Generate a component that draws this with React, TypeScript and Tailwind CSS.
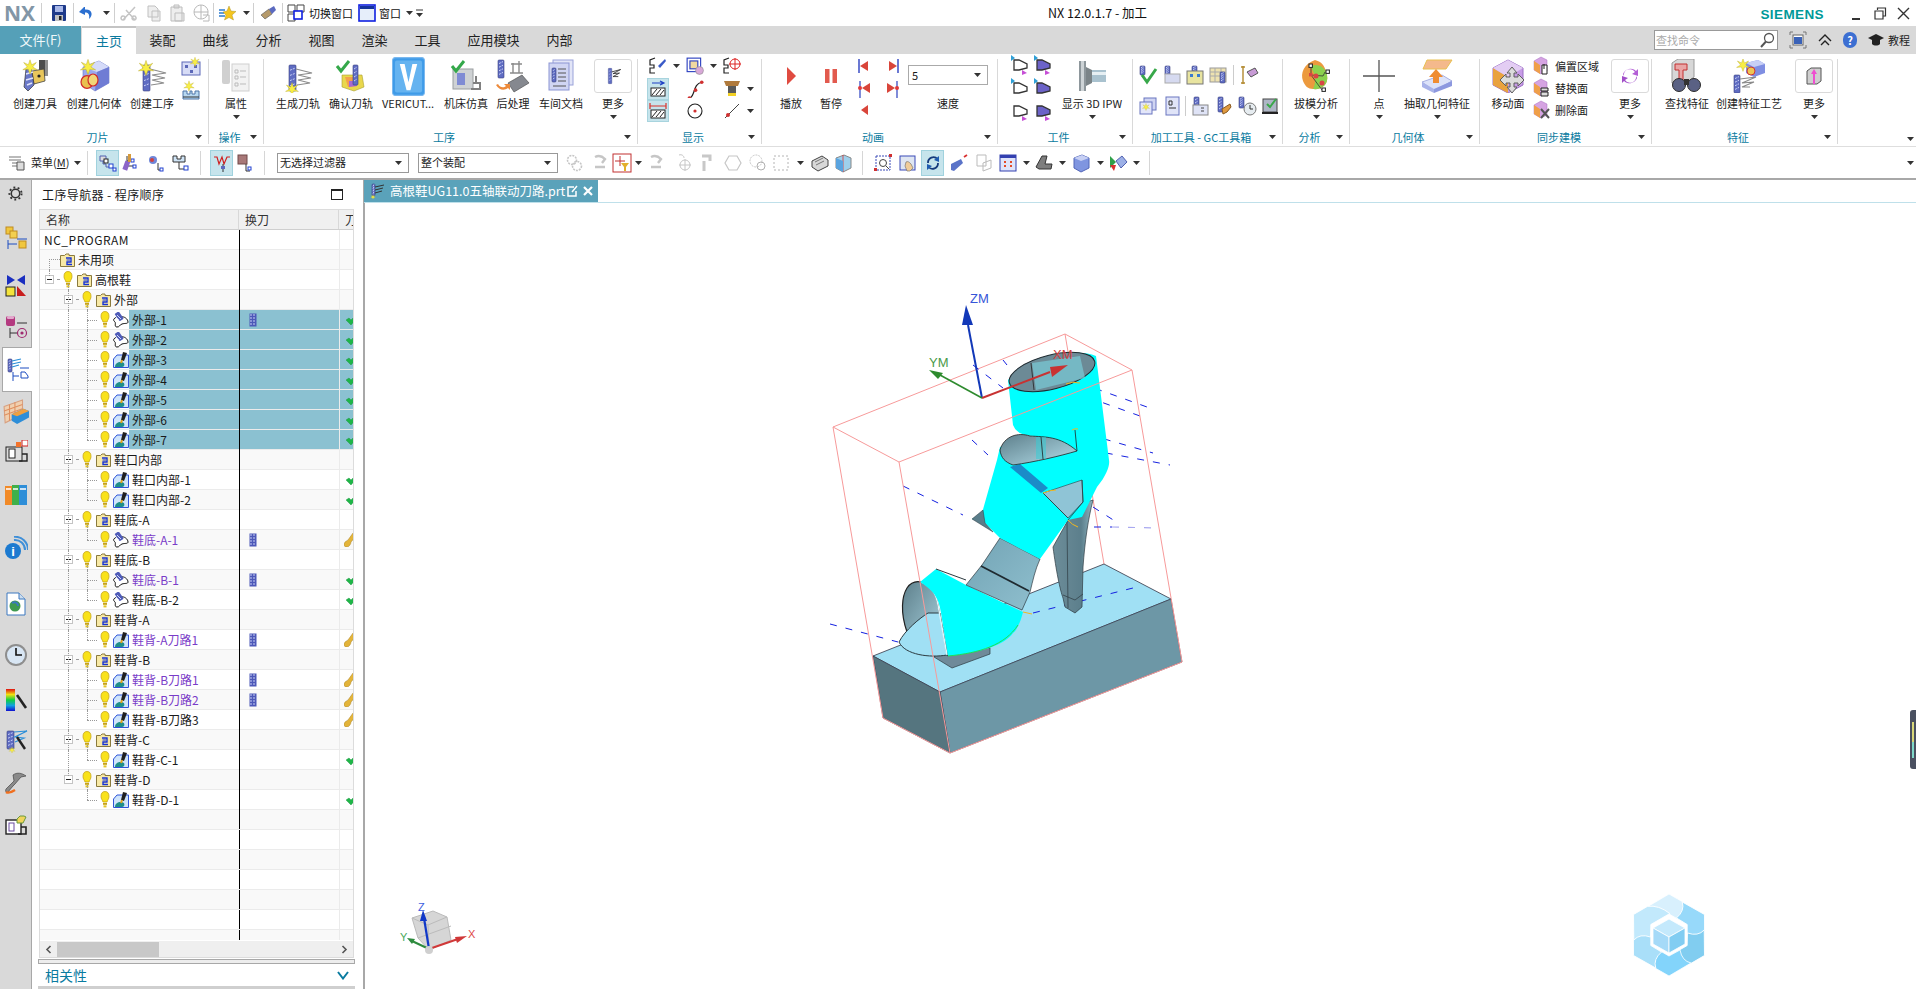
import React from "react";

type P = { c?: string; v?: string; children?: React.ReactNode };
const S = ({ c = "w-4 h-4", v = "0 0 16 16", children }: P) => (
  <svg viewBox={v} className={c + " shrink-0"}>{children}</svg>
);

const Spark = ({ x, y, s = 1 }: { x: number; y: number; s?: number }) => (
  <g transform={`translate(${x} ${y}) scale(${s})`}>
    <polygon points="0,-8 1.8,-2.5 7,-5 3,0 8,3 2,2.5 0,8 -2,2.5 -8,3 -3,0 -7,-5 -1.8,-2.5" fill="#f8ee45" stroke="#b8a82a" strokeWidth=".5" />
  </g>
);
const Bar = ({ x, y, w, h }: { x: number; y: number; w: number; h: number }) => (
  <g>
    <rect x={x} y={y} width={w} height={h} rx={1} fill="#5f6cc2" stroke="#39427f" strokeWidth=".6" />
    <path d={`M${x + 1} ${y + h * 0.2}l${w - 2} -2M${x + 1} ${y + h * 0.4}l${w - 2} -2M${x + 1} ${y + h * 0.6}l${w - 2} -2M${x + 1} ${y + h * 0.8}l${w - 2} -2`} stroke="#c9d0f5" strokeWidth="1" strokeDasharray="2 1" />
  </g>
);
const Caret = ({ c = "" }: { c?: string }) => (
  <svg viewBox="0 0 7 4" className={"w-[7px] h-[4px] shrink-0 " + c}><polygon points="0,0 7,0 3.5,4" fill="#333" /></svg>
);

/* ---- large ribbon icons ---- */
const big = "w-[34px] h-[34px]";
const V = "0 0 34 34";
const IcoCreateTool = () => (
  <S c={big} v={V}>
    <rect x="21" y="1" width="9" height="16" fill="#4c4c4c" />
    <rect x="27" y="1" width="3" height="16" fill="#8f8f8f" />
    <polygon points="14,12 26,10 27,22 16,25" fill="#e8c65c" stroke="#444" strokeWidth=".8" />
    <circle cx="21" cy="17" r="1.6" fill="#222" />
    <path d="M8 10L13 8L16 26L10 32L6 28Z" fill="#6a78c8" stroke="#333" strokeWidth=".7" />
    <path d="M8 15L15 13M8 21L15 19M9 26L14 24" stroke="#dfe3fa" strokeWidth="1.4" />
    <Spark x={12} y={8} s={0.9} />
  </S>
);
const IcoGeom = () => (
  <S c={big} v={V}>
    <polygon points="6,8 22,2 32,8 32,24 18,32 6,24" fill="#9ba8ee" stroke="#6a76c0" strokeWidth=".6" />
    <polygon points="6,8 20,13 32,8 22,2" fill="#d5dbf9" />
    <polygon points="20,13 32,8 32,24 18,32" fill="#6f7cd4" />
    <ellipse cx="10" cy="23" rx="6" ry="6.4" fill="#e9c04e" stroke="#d02a2a" strokeWidth="1.2" />
    <ellipse cx="16" cy="21" rx="5" ry="6" fill="#f2d678" stroke="#d02a2a" strokeWidth="1.2" />
    <Spark x={11} y={8} s={0.95} />
  </S>
);
const IcoOp = ({ spark = "top" }: { spark?: string }) => (
  <S c={big} v={V}>
    <Bar x={8} y={6} w={7} h={26} />
    <path d="M15 10L31 14L17 16L30 19L17 21L29 24L16 26" fill="none" stroke="#8b8b8b" strokeWidth="1.1" />
    {spark === "top" ? <Spark x={11} y={9} s={0.95} /> : <Spark x={11} y={30} s={0.8} />}
  </S>
);
const IcoProps = () => (
  <S c={big} v={V}>
    <rect x="3" y="1" width="8" height="24" rx="2" fill="#d0d0d0" />
    <rect x="13" y="5" width="17" height="27" fill="#f2f2f2" stroke="#cfcfcf" />
    <path d="M16 11h3v3h-3zM16 17h3v3h-3zM16 24h3v3h-3zM21 12h6M21 18h6M21 25h6" stroke="#bbb" fill="none" />
  </S>
);
const IcoVerify = () => (
  <S c={big} v={V}>
    <polygon points="8,16 28,16 30,28 20,32 8,28" fill="#e9d74c" stroke="#a8a030" strokeWidth=".6" />
    <polygon points="11,18 23,18 23,27 14,28" fill="#f3a04b" />
    <polygon points="15,22 23,22 23,27 15,28" fill="#a869d0" />
    <Bar x={19} y={6} w={5} h={20} />
    <path d="M3 7L7 12L15 2" fill="none" stroke="#34a84a" strokeWidth="3" />
  </S>
);
const IcoVericut = () => (
  <svg viewBox={V} className="w-[33px] h-[39px] shrink-0" preserveAspectRatio="none">
    <rect x="0.5" y="0.5" width="33" height="33" rx="3" fill="#3f9be8" stroke="#7ab8ef" />
    <rect x="3" y="3" width="28" height="28" rx="2" fill="#65b3f0" />
    <path d="M8 6L15 29H19L26 6H21L17 22L13 6Z" fill="#ffffff" />
  </svg>
);
const IcoSim = () => (
  <S c={big} v={V}>
    <rect x="4" y="10" width="20" height="20" fill="#cfd2d4" stroke="#9a9ea0" />
    <rect x="8" y="14" width="8" height="12" fill="#7f8bd4" />
    <path d="M24 24h7v6h-9M27 17v7" fill="none" stroke="#808080" strokeWidth="2" />
    <path d="M3 7L7 12L15 2" fill="none" stroke="#34a84a" strokeWidth="3" />
  </S>
);
const IcoPost = () => (
  <S c={big} v={V}>
    <Bar x={2} y={1} w={6} h={18} />
    <path d="M17 4v10M23 2v12M15 5h11M14 14h13" stroke="#8a8a8a" strokeWidth="1.4" fill="none" />
    <polygon points="12,24 26,16 33,24 18,33" fill="#85888f" stroke="#444" strokeWidth=".6" />
    <path d="M2 25c2 4 6 4 8 2l-2-2h6v6l-2-2c-4 3-9 2-12-3z" fill="#ed8a3a" />
  </S>
);
const IcoDoc = () => (
  <S c={big} v={V}>
    <rect x="9" y="1" width="20" height="25" fill="#e2e5f7" stroke="#9aa2d9" />
    <rect x="5" y="4" width="20" height="27" fill="#d0d5f3" stroke="#8b95d3" />
    <Bar x={8} y={9} w={4} h={14} />
    <path d="M14 10h8M14 14h8M14 18h8M14 22h8M9 27h13" stroke="#555" strokeWidth="1" />
  </S>
);
const IcoMoreOp = () => (
  <S c="w-[20px] h-[20px]" v={V}>
    <Bar x={9} y={4} w={6} h={26} />
    <path d="M15 10L30 6L17 13L28 12L17 18L26 18" fill="none" stroke="#333" strokeWidth="1.5" />
  </S>
);
const IcoPlay = () => <S c="w-[18px] h-[20px]" v="0 0 18 20"><polygon points="5,1 14,10 5,19" fill="#e04b40" /></S>;
const IcoPause = () => <S c="w-[18px] h-[16px]" v="0 0 18 16"><rect x="3" y="1" width="4.5" height="14" fill="#e25a4e" /><rect x="10.5" y="1" width="4.5" height="14" fill="#e25a4e" /></S>;
const IcoIPW = () => (
  <S c={big} v={V}>
    <rect x="4" y="2" width="7" height="30" fill="#8e979c" />
    <rect x="6" y="2" width="3" height="30" fill="#cdd3d6" />
    <polygon points="11,8 17,11 17,24 11,27" fill="#7b8488" />
    <rect x="17" y="11" width="14" height="12" fill="#a9c2cf" />
    <rect x="17" y="13" width="14" height="3" fill="#e6eff3" />
  </S>
);
const IcoDraft = () => (
  <S c={big} v={V}>
    <path d="M4 22C1 14 5 5 16 1C24 3 26 8 28 16C30 26 22 31 14 30C9 30 6 27 4 22Z" fill="#ec9a3e" />
    <path d="M11 7C20 4 26 8 28 16C30 26 22 31 14 30C18 22 16 14 11 7Z" fill="#8cd24e" />
    <path d="M12 7L12 16L23 31M12 16L24 17L26 13" fill="none" stroke="#333" strokeWidth=".8" />
    <rect x="10" y="5" width="3.4" height="3.4" fill="#fff" stroke="#222" />
    <rect x="10" y="14" width="3.4" height="3.4" fill="#d94545" />
    <rect x="23" y="29" width="3.4" height="3.4" fill="#fff" stroke="#222" />
    <rect x="27" y="11" width="3.4" height="3.4" fill="#fff" stroke="#222" />
    <circle cx="17" cy="17" r="2.5" fill="#d94545" />
    <circle cx="23" cy="24" r="2.5" fill="#d94545" />
  </S>
);
const IcoPoint = () => <S c={big} v={V}><path d="M17 1V33M1 17H33" stroke="#555" strokeWidth="1.3" /></S>;
const IcoExtract = () => (
  <S c={big} v={V}>
    <polygon points="7,1 32,1 26,10 3,10" fill="#f4b98c" stroke="#e8c050" />
    <polygon points="2,23 22,16 32,22 14,32" fill="#dce2f9" stroke="#7b86d0" strokeWidth=".6" />
    <polygon points="2,23 14,30 14,34 2,28" fill="#a9b3e9" />
    <polygon points="14,30 32,22 32,27 14,34" fill="#8d98df" />
    <path d="M13 24V18H9L16 10L23 18H19V24Z" fill="#ef8c32" />
  </S>
);
const IcoMoveFace = () => (
  <S c={big} v={V}>
    <polygon points="17,1 32,9 32,26 17,34 2,26 2,9" fill="#c79be6" stroke="#9a6fc4" />
    <polygon points="2,9 17,18 17,34 2,26" fill="#e9a23e" />
    <polygon points="17,1 32,9 17,18 2,9" fill="#e3cdf3" />
    <polygon points="21,8 26,14 23,14 23,18 27,18 27,15 33,21 27,27 27,24 23,24 23,28 26,28 21,34 16,28 19,28 19,24 15,24 15,27 9,21 15,15 15,18 19,18 19,14 16,14" fill="#dcdcdc" stroke="#5f5f5f" />
  </S>
);
const IcoFind = () => (
  <S c={big} v={V}>
    <polygon points="2,4 8,0 24,0 24,18 16,24 2,24" fill="#d7d7d7" stroke="#999" />
    <path d="M5 5H17V11H13V21H9V11H5Z" fill="#e9a5a5" stroke="#c23030" />
    <circle cx="9" cy="26" r="6.5" fill="#5a6184" stroke="#2b2b2b" />
    <circle cx="24" cy="26" r="6.5" fill="#5a6184" stroke="#2b2b2b" />
    <rect x="14" y="20" width="5" height="6" fill="#333" />
  </S>
);
const IcoFeat = () => (
  <S c={big} v={V}>
    <Bar x={2} y={16} w={6} h={18} />
    <path d="M8 20L24 18L10 24L22 23L10 28L18 28" fill="none" stroke="#888" strokeWidth="1.1" />
    <polygon points="14,4 26,1 33,5 33,14 22,18 14,14" fill="#7f8ee2" />
    <polygon points="14,4 26,1 33,5 22,8" fill="#c7cff6" />
    <circle cx="19" cy="12" r="4" fill="#edc653" stroke="#d13535" />
    <Spark x={11} y={6} s={0.8} />
  </S>
);
const IcoSync = () => (
  <S c="w-[20px] h-[20px]" v="0 0 20 20">
    <path d="M4 10A6 6 0 0 1 15 6L12 8L18 10L18 3L16 5A8 8 0 0 0 3 8Z" fill="#b35fd6" />
    <path d="M16 10A6 6 0 0 1 5 14L8 12L2 10L2 17L4 15A8 8 0 0 0 17 12Z" fill="#a14ec9" />
  </S>
);
const IcoPink = () => (
  <S c="w-[20px] h-[20px]" v="0 0 20 20">
    <polygon points="3,5 7,2 17,2 17,15 13,18 3,18" fill="#cfcfcf" stroke="#555" />
    <path d="M7 8L10 3L13 8H11V18H9V8Z" fill="#ee4fd0" />
  </S>
);

/* ---- small icons ---- */
const sm = "w-[20px] h-[20px]";
const V20 = "0 0 20 20";
const SmA = () => (
  <S c={sm} v={V20}><rect x="1" y="5" width="18" height="13" fill="#d7dcf6" stroke="#5c68b8" /><path d="M4 8h3v3H4zM9 13h3v3H9zM13 8h3v3h-3z" fill="#5c68b8" /><Spark x={14} y={5} s={0.6} /></S>
);
const SmB = () => (
  <S c={sm} v={V20}><path d="M2 11h4v3h3v-3h2v3h3v-3h4v8H2Z" fill="#b8d8f0" stroke="#4c74a8" /><path d="M2 17h16" stroke="#333" /><Spark x={8} y={6} s={0.65} /></S>
);
const FaceIco = ({ k }: { k: number }) => (
  <S c={sm} v={V20}>
    <polygon points="2,5 9,1 15,4 15,15 9,18 2,14" fill="#d5a3e2" stroke="#a66dc0" strokeWidth=".5" />
    <polygon points="2,5 8,9 8,18 2,14" fill="#ef9f49" />
    {k === 0 && <path d="M10 9h5v9h-5zM12 8v5" fill="#fff" stroke="#222" />}
    {k === 1 && <path d="M9 10h7v3H9zM9 14h7v4H9z" fill="#ddd" stroke="#222" />}
    {k === 2 && <path d="M9 9L17 18M17 9L9 18" stroke="#555" strokeWidth="2" />}
  </S>
);
const Sw = ({ fill = "#555", blue = true, dark = false }: { fill?: string; blue?: boolean; dark?: boolean }) => (
  <S c="w-[18px] h-[18px]" v="0 0 18 18">
    <polyline points="6,1 1,3 1,8 5,8 5,11 1,11 1,16 6,16" fill="none" stroke="#222" strokeWidth="1.2" />
    {blue && <polygon points="9,9 16,2 17,4 11,11" fill={fill} />}
    {dark && <circle cx="12" cy="7" r="5" fill="none" stroke="#d22" />}
    {dark && <path d="M6 7h12M12 1v12" stroke="#d22" />}
  </S>
);
const WPiece = ({ fill = "#fff", top = false, bottom = false }: { fill?: string; top?: boolean; bottom?: boolean }) => (
  <S c="w-[18px] h-[20px]" v="0 0 18 20">
    <path d="M3 5H8L16 9V13L8 15H3Z" fill={fill} stroke="#333" strokeWidth="1.3" />
    {top && <polygon points="0,0 4,3 0,6" fill="#2e9fd6" />}
    {bottom && <polygon points="11,15 16,18 11,20" fill="#c64fd6" />}
  </S>
);
const Step = ({ d }: { d: number }) => {
  const sets: Record<number, React.ReactNode> = {
    0: <><path d="M3 1V15" stroke="#2b3fc0" strokeWidth="1.4" /><polygon points="12,3 4,8 12,13" fill="#d9453a" /></>,
    1: <><polygon points="4,3 12,8 4,13" fill="#d9453a" /><path d="M13 1V15" stroke="#2b3fc0" strokeWidth="1.4" /></>,
    2: <><path d="M4 1V18" stroke="#2b3fc0" strokeWidth="1.2" /><circle cx="4" cy="8" r="2" fill="#e03a3a" /><polygon points="14,3 6,8 14,13" fill="#d9453a" /></>,
    3: <><polygon points="2,3 10,8 2,13" fill="#d9453a" /><path d="M12 1V18" stroke="#2b3fc0" strokeWidth="1.2" /><circle cx="12" cy="8" r="2" fill="#e03a3a" /></>,
    4: <polygon points="12,3 5,8 12,13" fill="#d9453a" />,
  };
  return <S c="w-[16px] h-[18px]" v="0 0 16 18">{sets[d]}</S>;
};
const Gc = ({ k }: { k: number }) => (
  <S c="w-[20px] h-[20px]" v={V20}>
    {k === 0 && <><Bar x={2} y={1} w={5} h={9} /><path d="M4 10L9 17L18 4" fill="none" stroke="#38a84a" strokeWidth="3" /></>}
    {k === 1 && <><Bar x={3} y={1} w={5} h={9} /><rect x="3" y="9" width="15" height="9" fill="#d6daf0" stroke="#aaa" /></>}
    {k === 2 && <><Bar x={7} y={1} w={5} h={10} /><rect x="2" y="6" width="16" height="13" fill="#e8e4a0" stroke="#777" /><path d="M5 9h3v3H5zM12 9h3v3h-3z" fill="#3a7ad0" /></>}
    {k === 3 && <><rect x="1" y="3" width="16" height="14" fill="#eee2b0" stroke="#999" /><path d="M1 7h16M1 11h16M6 3v14M12 3v14" stroke="#aaa" /><Bar x={11} y={7} w={5} h={11} /></>}
    {k === 4 && <><path d="M4 1v18M2 2h4M2 18h4" stroke="#b38a30" strokeWidth="1.4" /><path d="M8 7L16 3L19 8L12 12Z" fill="#c89bd6" stroke="#555" /></>}
    {k === 5 && <><rect x="6" y="2" width="12" height="12" fill="#cfd4f2" stroke="#6a76c0" /><rect x="2" y="6" width="12" height="12" fill="#e3e6fa" stroke="#6a76c0" /><Spark x={8} y={11} s={0.45} /></>}
    {k === 6 && <><rect x="4" y="1" width="13" height="18" fill="#e0e4f8" stroke="#6a76c0" /><path d="M7 5h3v4H7zM7 12h7" stroke="#333" fill="none" /></>}
    {k === 7 && <><Bar x={4} y={1} w={5} h={15} /><rect x="3" y="9" width="15" height="10" fill="#dfe3f6" stroke="#888" /><path d="M11 12h3M11 15h3" stroke="#444" /></>}
    {k === 8 && <><Bar x={5} y={1} w={5} h={15} /><path d="M9 13L17 8L18 11L14 16L10 18Z" fill="#e09a40" stroke="#8a5a20" /></>}
    {k === 9 && <><Bar x={2} y={1} w={5} h={11} /><circle cx="13" cy="13" r="6" fill="#e6ecf0" stroke="#777" /><path d="M13 9v4h3" stroke="#333" fill="none" /></>}
    {k === 10 && <><rect x="3" y="3" width="14" height="13" fill="#aeb6c6" stroke="#444" /><path d="M2 17h16" stroke="#222" strokeWidth="2" /><path d="M7 8l3 3 6-8" fill="none" stroke="#3aa84a" strokeWidth="2" /></>}
  </S>
);

/* ---- title bar icons ---- */
const Q = ({ k }: { k: string }) => (
  <S c="w-[18px] h-[18px]" v="0 0 18 18">
    {k === "save" && <><rect x="2" y="1" width="14" height="16" rx="1" fill="#1e3a8a" /><rect x="5" y="2" width="8" height="6" fill="#a9b8e8" /><rect x="5" y="11" width="8" height="6" fill="#c2c2c2" /><rect x="9" y="12" width="2.5" height="4" fill="#222" /></>}
    {k === "undo" && <path d="M6 3L1 8L7 11V8.5C10 8.5 12 10 11 15C15 12 15 5 7 5.5V3Z" fill="#2b6fd0" />}
    {k === "cut" && <path d="M3 16L15 3M15 16L6 6M3 12a2 2 0 1 0 .1 0M14 12a2 2 0 1 0 .1 0" stroke="#c4c4c4" strokeWidth="1.5" fill="none" />}
    {k === "copy" && <path d="M3 2h7l3 3v8H3ZM7 7h8v10H7Z" fill="#eee" stroke="#c0c0c0" />}
    {k === "paste" && <path d="M3 3h11v14H3ZM6 1h5v3H6ZM7 9h9v8H7Z" fill="#eee" stroke="#bdbdbd" />}
    {k === "move" && <path d="M9 1a7 7 0 1 0 .1 0M2 8h14M9 1v14M11 11h6v6h-6" fill="none" stroke="#b8b8b8" />}
    {k === "star" && <><path d="M1 6h6M1 9h5M1 12h6" stroke="#2b7bd0" strokeWidth="1.4" /><polygon points="11,2 13,7 18,7.5 14,11 15.5,16 11,13.5 6.5,16 8,11 5,8 9,7" fill="#f4c51f" stroke="#9c8518" strokeWidth=".4" /></>}
    {k === "brush" && <><polygon points="2,11 10,5 13,10 6,15" fill="#b59a6a" stroke="#555" strokeWidth=".6" /><polygon points="10,5 15,2 17,6 13,10" fill="#5b6ac0" /></>}
    {k === "switch" && <><path d="M1 1h7v7H1ZM10 1h7v7h-7ZM1 10h7v7H1Z" fill="#fff" stroke="#444" /><rect x="7" y="7" width="8" height="8" fill="#fff" stroke="#1020e0" strokeWidth="1.6" /></>}
    {k === "win" && <><rect x="1" y="1" width="16" height="16" fill="#e6eefa" stroke="#1020e0" strokeWidth="1.6" /><rect x="2" y="2" width="14" height="3" fill="#14339b" /></>}
    {k === "menu" && <><path d="M1 3h12M1 6h12M4 9h8M4 12h8" stroke="#777" strokeWidth="1.2" /><path d="M9 8h7v8h-7z" fill="#ddd" stroke="#555" /></>}
  </S>
);
const QSep = ({ c }: { c: string }) => <div className={c + " flex justify-center"}><div className="w-px h-[20px] bg-[#cfcfcf]" /></div>;
const Box = ({ c, children }: { c: string; children: React.ReactNode }) => <div className={c + " flex items-center justify-center shrink-0"}>{children}</div>;

const TitleBar = () => (
  <div className="h-[26px] flex items-center text-[11px] text-[#111]">
    <div className="w-[1048px] flex items-center pl-[4px] shrink-0">
      <div className="w-[33px] font-['Open_Sans',sans-serif] font-bold text-[21px] leading-[26px] text-[#8296a6]">NX</div>
      <QSep c="w-[9px]" />
      <Box c="w-[26px]"><Q k="save" /></Box>
      <QSep c="w-[2px]" />
      <Box c="w-[26px]"><Q k="undo" /></Box>
      <Box c="w-[12px]"><Caret /></Box>
      <QSep c="w-[4px]" />
      <Box c="w-[26px]"><Q k="cut" /></Box>
      <Box c="w-[23px]"><Q k="copy" /></Box>
      <Box c="w-[23px]"><Q k="paste" /></Box>
      <Box c="w-[25px]"><Q k="move" /></Box>
      <QSep c="w-[1px]" />
      <Box c="w-[26px]"><Q k="star" /></Box>
      <Box c="w-[12px]"><Caret /></Box>
      <QSep c="w-[2px]" />
      <Box c="w-[27px]"><Q k="brush" /></Box>
      <QSep c="w-[2px]" />
      <Box c="w-[26px]"><Q k="switch" /></Box>
      <div className="w-[46px] whitespace-nowrap">切换窗口</div>
      <Box c="w-[24px]"><Q k="win" /></Box>
      <div className="w-[26px] whitespace-nowrap">窗口</div>
      <Box c="w-[8px]"><Caret /></Box>
      <Box c="w-[12px]"><S c="w-[7px] h-[8px]" v="0 0 7 8"><path d="M0 1h7" stroke="#333" /><polygon points="0,4 7,4 3.5,8" fill="#333" /></S></Box>
    </div>
    <div className="whitespace-nowrap text-[12.5px]">NX 12.0.1.7 - 加工</div>
    <div className="flex-1" />
    <div className="font-['Liberation_Sans',sans-serif] font-bold text-[13.5px] tracking-[0.4px] text-[#009999] mt-[4px]">SIEMENS</div>
    <Box c="w-[28px] ml-[18px] h-[26px]"><div className="w-[8px] h-[2px] bg-[#333] mt-[12px]" /></Box>
    <Box c="w-[20px] h-[26px]"><S c="w-[13px] h-[13px]" v="0 0 13 13"><path d="M3.5 3V1h8v8h-2M1 4h8v8H1Z" fill="none" stroke="#333" strokeWidth="1.2" /></S></Box>
    <Box c="w-[26px] h-[26px]"><S c="w-[13px] h-[13px]" v="0 0 13 13"><path d="M1 1L12 12M12 1L1 12" stroke="#333" strokeWidth="1.4" /></S></Box>
  </div>
);

const TabsBar = () => (
  <div className="h-[28px] bg-[#d9d9d9] flex items-stretch text-[13px] text-[#222]">
    <div className="w-[81px] bg-[#55a0b8] text-[#f1f8fa] flex items-center justify-center">文件(F)</div>
    <div className="w-[54px] ml-px bg-white text-[#0b7a9e] border-t-2 border-[#c4c4c4] flex items-center justify-center">主页</div>
    {["装配", "曲线", "分析", "视图", "渲染", "工具", "应用模块", "内部"].map((t) => (
      <div key={t} className="px-[13.5px] flex items-center whitespace-nowrap">{t}</div>
    ))}
    <div className="flex-1" />
    <div className="w-[124px] h-[20px] mt-[4px] bg-white border border-[#999] flex items-center justify-between pl-[1px] pr-[2px] text-[11px] text-[#aaa]">
      <span>查找命令</span>
      <S c="w-[16px] h-[16px]"><circle cx="10" cy="6" r="4.5" fill="#fff" stroke="#555" strokeWidth="1.3" /><path d="M7 9.5L2 15" stroke="#555" strokeWidth="2" /></S>
    </div>
    <Box c="w-[40px]"><S c="w-[18px] h-[18px]" v="0 0 18 18"><path d="M1 4V1H4M14 1H17V4M17 14V17H14M4 17H1V14" fill="none" stroke="#777" /><rect x="4" y="4" width="10" height="10" fill="#fff" stroke="#666" /><rect x="5" y="6" width="8" height="7" fill="#3a62b8" /></S></Box>
    <Box c="w-[13px]"><S c="w-[14px] h-[12px]" v="0 0 14 12"><path d="M1 7L7 1L13 7M3 11L7 7L11 11" fill="none" stroke="#222" strokeWidth="1.4" /></S></Box>
    <Box c="w-[38px]"><div className="w-[14px] h-[16px] rounded-full bg-[#3c6fd2] text-white text-[11px] font-bold flex items-center justify-center">?</div></Box>
    <Box c="w-[14px]"><S c="w-[16px] h-[12px]" v="0 0 16 12"><polygon points="0,4 8,0 16,4 8,8" fill="#222" /><path d="M4 6v4c2 2 6 2 8 0V6" fill="#222" /></S></Box>
    <div className="pl-[5px] w-[33px] text-[11px] flex items-center whitespace-nowrap">教程</div>
  </div>
);

const Btn = ({ w, label, icon, caret, more }: { w: string; label: string; icon: React.ReactNode; caret?: boolean; more?: boolean }) => (
  <div className={w + " flex flex-col items-center shrink-0"}>
    {more ? (
      <div className="w-[38px] h-[34px] border border-[#dadada] rounded-[3px] flex items-center justify-center">{icon}</div>
    ) : (
      <div className="h-[34px] flex items-center justify-center">{icon}</div>
    )}
    <div className="h-[18px] mt-[1px] leading-[18px] text-[11px] text-[#1c1c1c] whitespace-nowrap">{label}</div>
    {caret && <div className="h-[10px] flex items-center"><Caret /></div>}
  </div>
);

const Group = ({ w, label, body }: { w: string; label: string; body: React.ReactNode }) => (
  <div className={w + " h-[85px] shrink-0 border-r border-[#d9d9d9] flex flex-col"}>
    <div className="h-[71px] flex">{body}</div>
    <div className="h-[14px] flex items-center">
      <div className="flex-1 text-center text-[11px] leading-[14px] text-[#0a7ba0] whitespace-nowrap">{label}</div>
      <Caret c="mr-[6px]" />
    </div>
  </div>
);

const Cell = ({ children, caret, sel }: { children: React.ReactNode; caret?: boolean; sel?: boolean }) => (
  <div className="w-[37px] flex items-center">
    <div className={"w-[22px] h-[22px] flex items-center justify-center " + (sel ? "bg-[#c6e4ec] border border-[#a8d4de]" : "")}>{children}</div>
    {caret && <Caret c="ml-[4px]" />}
  </div>
);

const Hatch = ({ top }: { top: boolean }) => (
  <S c="w-[18px] h-[18px]" v="0 0 18 18">
    {top ? <path d="M3 3H14M11 1L15 3L11 5" stroke="#1d3fc4" strokeWidth="1.2" fill="none" /> : <path d="M1 4H17M1 1V7M17 1V7" stroke="#d9322a" strokeWidth="1.2" fill="none" />}
    <rect x="2" y="8" width="14" height="8" fill="#fff" stroke="#222" />
    <path d="M3 15L8 9M7 15L12 9M11 15L15 10" stroke="#222" />
  </S>
);

const Ribbon = () => (
  <div className="h-[93px] pt-[5px] flex items-start border-b border-[#dedede]">
    <Group w="w-[209px]" label="刀片" body={<>
      <div className="w-[6px]" />
      <Btn w="w-[58px]" label="创建刀具" icon={<IcoCreateTool />} />
      <Btn w="w-[60px]" label="创建几何体" icon={<IcoGeom />} />
      <Btn w="w-[56px]" label="创建工序" icon={<IcoOp />} />
      <div className="w-[22px] flex flex-col items-center -mt-[2px] gap-[3px]"><SmA /><SmB /></div>
    </>} />
    <Group w="w-[55px]" label="操作" body={<div className="flex-1 flex justify-center"><Btn w="w-[50px]" label="属性" icon={<IcoProps />} caret /></div>} />
    <Group w="w-[374px]" label="工序" body={<>
      <div className="w-[8px]" />
      <Btn w="w-[54px]" label="生成刀轨" icon={<IcoOp spark="bottom" />} />
      <Btn w="w-[52px]" label="确认刀轨" icon={<IcoVerify />} />
      <Btn w="w-[62px]" label="VERICUT..." icon={<IcoVericut />} />
      <Btn w="w-[54px]" label="机床仿真" icon={<IcoSim />} />
      <Btn w="w-[40px]" label="后处理" icon={<IcoPost />} />
      <Btn w="w-[56px]" label="车间文档" icon={<IcoDoc />} />
      <Btn w="w-[48px]" label="更多" icon={<IcoMoreOp />} caret more />
    </>} />
    <Group w="w-[124px]" label="显示" body={
      <div className="pl-[9px] flex flex-col">
        <div className="flex h-[19px] -mt-[3px]"><Cell caret><Sw fill="#3a5ac8" /></Cell><Cell caret><S c="w-[18px] h-[18px]"><rect x="1" y="1" width="12" height="12" fill="#fff" stroke="#2b3fc0" /><rect x="3.5" y="3.5" width="7" height="7" fill="#f0d8a0" stroke="#2b3fc0" /><circle cx="12" cy="12" r="3.5" fill="#d8a8d8" stroke="#888" strokeWidth=".5" /></S></Cell><Cell><Sw blue={false} dark /></Cell></div>
        <div className="flex h-[22px] mt-[3px]"><Cell sel><Hatch top /></Cell><Cell><S c="w-[18px] h-[18px]"><path d="M3 16C8 16 6 3 14 2" fill="none" stroke="#222" strokeWidth="1.1" /><circle cx="3" cy="16" r="1.6" fill="#d03030" /><circle cx="14" cy="2" r="1.6" fill="#d03030" /><circle cx="8.5" cy="9" r="1.6" fill="#d03030" /></S></Cell><Cell caret><S c="w-[18px] h-[18px]" v="0 0 18 18"><path d="M1 1H17L15 6H3Z" fill="#b07a3c" /><rect x="5" y="6" width="8" height="9" fill="#5a5a5a" /><rect x="5" y="13" width="8" height="3" fill="#f2d023" /></S></Cell></div>
        <div className="flex h-[22px]"><Cell sel><Hatch top={false} /></Cell><Cell><S c="w-[18px] h-[18px]" v="0 0 18 18"><circle cx="9" cy="9" r="7" fill="#fff" stroke="#222" strokeWidth="1.1" /><circle cx="9" cy="9" r="1.6" fill="#d03030" /></S></Cell><Cell caret><S c="w-[18px] h-[18px]" v="0 0 18 18"><path d="M2 16L16 2" stroke="#444" /><circle cx="5" cy="13" r="2" fill="#d03030" /></S></Cell></div>
      </div>
    } />
    <Group w="w-[236px]" label="动画" body={<>
      <div className="w-[8px]" />
      <Btn w="w-[42px]" label="播放" icon={<IcoPlay />} />
      <Btn w="w-[38px]" label="暂停" icon={<IcoPause />} />
      <div className="w-[28px] flex flex-col items-center -mt-px gap-[4px]"><Step d={0} /><Step d={2} /><Step d={4} /></div>
      <div className="w-[30px] flex flex-col items-center -mt-px gap-[4px]"><Step d={1} /><Step d={3} /></div>
      <div className="w-[80px] flex flex-col items-center">
        <div className="w-[80px] h-[20px] mt-[6px] border border-[#aaa] flex items-center justify-between pl-[3px] pr-[6px] text-[11px]"><span>5</span><Caret /></div>
        <div className="mt-[9px] text-[11px] leading-[18px]">速度</div>
      </div>
    </>} />
    <Group w="w-[135px]" label="工件" body={<>
      <div className="w-[10px]" />
      <div className="w-[23px] flex flex-col items-center -mt-[4px] gap-[3px]"><WPiece top bottom /><WPiece top /><WPiece bottom /></div>
      <div className="w-[23px] flex flex-col items-center -mt-[4px] gap-[3px]"><WPiece fill="#6c63c8" top bottom /><WPiece fill="#6c63c8" top /><WPiece fill="#6c63c8" bottom /></div>
      <Btn w="w-[76px]" label="显示 3D IPW" icon={<IcoIPW />} caret />
    </>} />
    <Group w="w-[150px]" label="加工工具 - GC工具箱" body={
      <div className="flex flex-col pl-[5px] pt-[6px] gap-[11px]">
        <div className="flex items-center gap-[3.5px]"><Gc k={0} /><Gc k={1} /><Gc k={2} /><Gc k={3} /><div className="w-px h-[20px] bg-[#ccc] mx-[1px]" /><Gc k={4} /></div>
        <div className="flex items-center gap-[3.5px]"><Gc k={5} /><Gc k={6} /><div className="w-px h-[20px] bg-[#ccc]" /><Gc k={7} /><Gc k={8} /><Gc k={9} /><Gc k={10} /></div>
      </div>
    } />
    <Group w="w-[67px]" label="分析" body={<div className="flex-1 flex justify-center"><Btn w="w-[60px]" label="拔模分析" icon={<IcoDraft />} caret /></div>} />
    <Group w="w-[130px]" label="几何体" body={<>
      <Btn w="w-[58px]" label="点" icon={<IcoPoint />} caret />
      <Btn w="w-[58px]" label="抽取几何特征" icon={<IcoExtract />} caret />
    </>} />
    <Group w="w-[172px]" label="同步建模" body={<>
      <Btn w="w-[56px]" label="移动面" icon={<IcoMoveFace />} />
      <div className="w-[72px] flex flex-col -ml-[4px] mr-[4px] -mt-[3px] gap-[2px] text-[11px] whitespace-nowrap">
        {["偏置区域", "替换面", "删除面"].map((t, i) => <div key={t} className="h-[20px] flex items-center gap-[3px]"><FaceIco k={i} /><span>{t}</span></div>)}
      </div>
      <div className="w-[2px]" />
      <Btn w="w-[40px]" label="更多" icon={<IcoSync />} caret more />
    </>} />
    <Group w="w-[186px]" label="特征" body={<>
      <Btn w="w-[70px]" label="查找特征" icon={<IcoFind />} />
      <Btn w="w-[54px]" label="创建特征工艺" icon={<IcoFeat />} />
      <div className="w-[16px]" />
      <Btn w="w-[44px]" label="更多" icon={<IcoPink />} caret more />
    </>} />
    <div className="flex-1 h-[85px] flex items-end justify-end pr-[2px] pb-[3px]"><Caret /></div>
  </div>
);

const TI = ({ k }: { k: number }) => (
  <S c="w-[20px] h-[20px]" v={V20}>
    {k === 0 && <><path d="M2 3h6v5H2ZM5 8v3h3v3h3" fill="#ddd" stroke="#5060b0" /><rect x="6" y="6" width="4" height="4" fill="#fff" stroke="#222" /><rect x="11" y="11" width="4" height="4" fill="#fff" stroke="#2040d0" /><rect x="15" y="15" width="3" height="3" fill="#fff" stroke="#2040d0" /></>}
    {k === 1 && <><path d="M6 3v10h6M6 8h6" stroke="#333" fill="none" /><rect x="10" y="6" width="3" height="3" fill="#fff" stroke="#2040d0" /><rect x="12" y="12" width="3" height="3" fill="#fff" stroke="#2040d0" /><rect x="3" y="8" width="5" height="9" fill="#8c64c8" transform="rotate(20 5 12)" /><rect x="7" y="1" width="3" height="8" fill="#d69a3c" /></>}
    {k === 2 && <><circle cx="6" cy="7" r="4" fill="#6f86d8" /><circle cx="5" cy="7" r="2" fill="#d04040" /><path d="M11 10v7h4" stroke="#333" fill="none" /><rect x="13" y="15" width="3" height="3" fill="#fff" stroke="#2040d0" /></>}
    {k === 3 && <><path d="M2 3h4v3h4V3h4v6H2Z" fill="#cfe4f6" stroke="#333" /><path d="M8 9v7h5" stroke="#333" fill="none" /><rect x="13" y="13" width="4" height="4" fill="#fff" stroke="#2040d0" /></>}
    {k === 4 && <><path d="M2 4h3l2 7 3-7 2 7 3-7h3" fill="none" stroke="#d02020" strokeWidth="1.2" /><path d="M11 11v8" stroke="#333" /><rect x="9" y="13" width="4" height="3" fill="#5c68c0" /></>}
    {k === 5 && <><rect x="3" y="2" width="9" height="9" fill="#a87878" stroke="#704848" /><path d="M11 11v7h4" stroke="#333" fill="none" /><rect x="13" y="14" width="3" height="3" fill="#fff" stroke="#2040d0" /></>}
    {k === 6 && <><circle cx="7" cy="7" r="4.5" fill="none" stroke="#c6c6c6" strokeWidth="1.6" strokeDasharray="2 1" /><circle cx="12" cy="13" r="4.5" fill="none" stroke="#c6c6c6" strokeWidth="1.6" strokeDasharray="2 1" /></>}
    {k === 7 && <><path d="M4 4c4-2 8 0 10 2l-3 4M4 14h10" stroke="#c6c6c6" strokeWidth="2.4" fill="none" /></>}
    {k === 8 && <><rect x="1" y="1" width="18" height="18" fill="#fff" stroke="#c13030" /><path d="M8 3v10M3 8h10" stroke="#c13030" /><polygon points="9,10 17,10 14,14 14,18 12,18 12,14" fill="#e2b02c" /></>}
    {k === 9 && <><circle cx="10" cy="12" r="5" fill="none" stroke="#c6c6c6" /><path d="M10 6v12M4 12h12M4 2c3-1 5 1 5 3" stroke="#c6c6c6" fill="none" /></>}
    {k === 10 && <><path d="M3 3l8 0 0 5 M5 8v10" stroke="#c8c8c8" strokeWidth="3" fill="none" /></>}
    {k === 11 && <polygon points="6,3 14,3 18,10 14,17 6,17 2,10" fill="none" stroke="#c6c6c6" strokeWidth="1.2" />}
    {k === 12 && <><circle cx="8" cy="8" r="6" fill="none" stroke="#c6c6c6" strokeDasharray="2 1" /><circle cx="13" cy="13" r="4" fill="none" stroke="#b0b0b0" /></>}
    {k === 13 && <rect x="3" y="3" width="14" height="14" fill="none" stroke="#b4b4b4" strokeDasharray="2 2" />}
    {k === 14 && <><polygon points="2,8 12,3 18,7 18,13 8,18 2,14" fill="#d8d8d8" stroke="#444" /><path d="M5 9l8-4M6 12l8-4" stroke="#777" /></>}
    {k === 15 && <><polygon points="3,5 11,2 18,5 18,15 10,19 3,15" fill="#9ed0ec" stroke="#888" /><path d="M10 2v17" stroke="#e02020" strokeWidth=".7" /><polygon points="3,5 10,8 10,19 3,15" fill="#5aa4e0" /></>}
    {k === 16 && <><rect x="3" y="3" width="14" height="14" fill="#fff" stroke="#3a4ab8" strokeDasharray="2 1" /><circle cx="10" cy="10" r="3.5" fill="none" stroke="#444" /><path d="M13 13l3 3" stroke="#444" /><rect x="1" y="15" width="3" height="3" fill="#d03030" /><rect x="16" y="1" width="3" height="3" fill="#d03030" /></>}
    {k === 17 && <><rect x="2" y="3" width="15" height="14" fill="#dfe6f2" stroke="#3a4ab8" /><path d="M8 9c2-1 3 0 5 2l2 4-3 3h-3L7 13Z" fill="#f0cd9a" stroke="#666" strokeWidth=".6" /></>}
    {k === 18 && <><path d="M15 10a5.5 5.5 0 0 1-9.5 4M5 10A5.5 5.5 0 0 1 14.5 6" fill="none" stroke="#163a7c" strokeWidth="1.8" /><polygon points="16,3 16,9 11,7" fill="#1f5bb0" /><polygon points="4,17 4,11 9,13" fill="#1f5bb0" /></>}
    {k === 19 && <><polygon points="2,11 12,6 14,10 5,18 2,17" fill="#5a73c8" /><path d="M15 4l3-2" stroke="#d93030" strokeWidth="1.8" /></>}
    {k === 20 && <><path d="M3 2h9v11H3ZM9 10l8-3v8l-8 3Z" fill="#fff" stroke="#bbb" /></>}
    {k === 21 && <><rect x="2" y="2" width="16" height="16" fill="#dfe4fa" stroke="#3340b0" /><rect x="2" y="2" width="16" height="3" fill="#3340b0" /><path d="M6 8h2v2H6zM12 8h2v2h-2zM6 12h2v2H6zM12 12h2v2h-2z" fill="#e44a28" /></>}
    {k === 22 && <><path d="M2 14L8 3h5l-2 8h7l-1 5H5Z" fill="#7e7e7e" stroke="#333" /></>}
    {k === 23 && <><polygon points="3,5 11,2 18,5 18,15 10,19 3,15" fill="#7f95e0" stroke="#5366b8" /><polygon points="3,5 11,2 18,5 10,8" fill="#c7d0f4" /></>}
    {k === 24 && <><polygon points="2,3 8,9 2,15" fill="#30a04a" /><polygon points="8,8 14,3 19,9 13,15" fill="#9cb0e6" stroke="#5060b0" /><polygon points="2,12 8,12 6,18" fill="#d93030" /></>}
  </S>
);

const SelBtn = ({ k, c = "" }: { k: number; c?: string }) => <div className={"w-[23px] h-[26px] bg-[#c6e4ec] border border-[#a0d2de] flex items-center justify-center shrink-0 " + c}><TI k={k} /></div>;
const Dd = ({ t, c }: { t: string; c: string }) => (
  <div className={c + " h-[20px] shrink-0 bg-white border border-[#999] flex items-center justify-between pl-[2px] pr-[6px] text-[11px] whitespace-nowrap"}><span>{t}</span><Caret /></div>
);
const TSep = ({ c }: { c: string }) => <div className={c + " shrink-0 flex justify-center"}><div className="w-px h-[24px] bg-[#d6d6d6]" /></div>;

const Toolbar = () => (
  <div className="h-[33px] flex items-center border-b-2 border-[#a8a8a8]">
    <div className="w-[3px]" />
    <Box c="w-[28px]"><Q k="menu" /></Box>
    <div className="w-[42px] shrink-0 text-[11px] whitespace-nowrap">菜单(<span className="underline">M</span>)</div>
    <Box c="w-[8px]"><Caret /></Box>
    <TSep c="w-[12px]" />
    <SelBtn k={0} c="ml-[3px]" />
    <Box c="w-[24px]"><TI k={1} /></Box>
    <Box c="w-[28px]"><TI k={2} /></Box>
    <Box c="w-[20px]"><TI k={3} /></Box>
    <TSep c="w-[19px]" />
    <SelBtn k={4} />
    <Box c="w-[24px]"><TI k={5} /></Box>
    <TSep c="w-[14px]" />
    <Dd t="无选择过滤器" c="w-[132px] ml-[6px]" />
    <Dd t="整个装配" c="w-[140px] ml-[9px]" />
    <Box c="w-[34px]"><TI k={6} /></Box>
    <Box c="w-[18px]"><TI k={7} /></Box>
    <Box c="w-[24px]"><TI k={8} /></Box>
    <Box c="w-[8px]"><Caret /></Box>
    <Box c="w-[30px]"><TI k={7} /></Box>
    <Box c="w-[25px]"><TI k={9} /></Box>
    <Box c="w-[23px]"><TI k={10} /></Box>
    <Box c="w-[26px]"><TI k={11} /></Box>
    <Box c="w-[23px]"><TI k={12} /></Box>
    <Box c="w-[23px]"><TI k={13} /></Box>
    <Box c="w-[16px]"><Caret /></Box>
    <Box c="w-[23px]"><TI k={14} /></Box>
    <Box c="w-[24px]"><TI k={15} /></Box>
    <TSep c="w-[14px]" />
    <Box c="w-[28px]"><TI k={16} /></Box>
    <Box c="w-[21px]"><TI k={17} /></Box>
    <SelBtn k={18} c="ml-[3px]" />
    <Box c="w-[30px]"><TI k={19} /></Box>
    <Box c="w-[19px]"><TI k={20} /></Box>
    <Box c="w-[30px]"><TI k={21} /></Box>
    <Box c="w-[6px]"><Caret /></Box>
    <Box c="w-[30px]"><TI k={22} /></Box>
    <Box c="w-[6px]"><Caret /></Box>
    <Box c="w-[32px]"><TI k={23} /></Box>
    <Box c="w-[7px]"><Caret /></Box>
    <Box c="w-[28px]"><TI k={24} /></Box>
    <Box c="w-[8px]"><Caret /></Box>
    <TSep c="w-[19px]" />
    <div className="flex-1" />
    <Caret c="mr-[2px]" />
  </div>
);

/* ---- left rail ---- */
const rs = "w-[24px] h-[24px]";
const V24 = "0 0 24 24";
const Rail = () => (
  <div className="w-[32px] shrink-0 bg-[#d9d9d9] border-r border-[#a8a8a8] flex flex-col">
    <Box c="h-[26px] w-full"><S c="w-[15px] h-[15px]"><circle cx="8" cy="8" r="4.5" fill="none" stroke="#333" strokeWidth="1.6" /><circle cx="8" cy="8" r="6.5" fill="none" stroke="#333" strokeWidth="2" strokeDasharray="2 2.6" /></S></Box>
    <Box c="h-[64px] w-full"><S c={rs} v={V24}><rect x="2" y="1" width="7" height="7" fill="#f0c73e" stroke="#c08c20" /><rect x="6" y="5" width="7" height="7" fill="#f3cf50" stroke="#c08c20" /><rect x="15" y="15" width="7" height="7" fill="#f0c73e" stroke="#c08c20" /><path d="M4 14V23M4 18H13M13 13H23" stroke="#1c4cc0" strokeWidth="1" fill="none" /></S></Box>
    <Box c="h-[30px] w-full"><S c={rs} v={V24}><polygon points="3,2 11,7 3,12" fill="#1b2fc0" /><polygon points="21,2 13,7 21,12" fill="#1b2fc0" /><rect x="2" y="14" width="9" height="9" fill="#f4e43c" stroke="#222" /><polygon points="13,23 13,13 22,23" fill="#c81e1e" /></S></Box>
    <Box c="h-[47px] w-full pt-[7px]"><S c={rs} v={V24}><rect x="2" y="1" width="9" height="10" rx="2" fill="#b43a80" /><rect x="3" y="1" width="7" height="3" rx="1" fill="#e2a8cc" /><path d="M13 8H23M6 13V23M6 18H13" stroke="#333" fill="none" /><circle cx="18" cy="18" r="4.5" fill="none" stroke="#a02a70" strokeWidth="1.2" /><circle cx="18" cy="18" r="1.6" fill="#a02a70" /></S></Box>
    <div className="h-[45px] w-[31px] ml-[2px] -mr-[1px] bg-white border border-r-0 border-[#a8a8a8] flex items-center justify-center"><S c={rs} v={V24}><Bar x={2} y={1} w={4} h={13} /><path d="M6 3L15 1M6 6L15 4M6 9L13 7" stroke="#2a8ed8" strokeWidth="1.2" /><path d="M7 14V23M7 18H13M14 10H23" stroke="#1c4cc0" fill="none" /><path d="M15 14h4l3 4v2h-7Z" fill="none" stroke="#1c4cc0" /></S></div>
    <Box c="h-[40px] w-full"><S c="w-[26px] h-[26px]" v={V24}><polygon points="1,7 18,1 18,14 2,22" fill="#f0d0b0" stroke="#d8a080" /><path d="M1 11L18 5M1 15L18 9M6 5V20M11 3V17" stroke="#e09060" /><polygon points="8,14 19,9 24,11 24,17 13,23 8,20" fill="#2e8ed8" /><polygon points="8,14 19,9 24,11 13,16" fill="#f0a040" /></S></Box>
    <Box c="h-[40px] w-full"><S c={rs} v={V24}><rect x="2" y="7" width="16" height="14" fill="#ddd" stroke="#222" /><rect x="5" y="9" width="6" height="9" fill="#fff" stroke="#222" /><path d="M18 14h5v7h-8" fill="none" stroke="#222" strokeWidth="1.4" /><rect x="12" y="2" width="5" height="5" fill="#f4742c" /><rect x="18" y="0" width="6" height="6" fill="#fff" stroke="#d02020" /></S></Box>
    <Box c="h-[46px] w-full"><S c={rs} v={V24}><rect x="1" y="3" width="7" height="19" fill="#f18a28" /><rect x="8" y="2" width="7" height="20" fill="#3fb04a" /><rect x="15" y="2" width="8" height="20" fill="#2e8ed8" /><path d="M2 6h5M9 6h5M16 6h6" stroke="#fff" strokeWidth="1.4" /></S></Box>
    <Box c="h-[60px] w-full"><S c={rs} v={V24}><circle cx="9" cy="15" r="8" fill="#1c7ad0" /><text x="9" y="20" textAnchor="middle" fontSize="13" fontWeight="700" fill="#fff" fontFamily="Liberation Sans">i</text><path d="M10 4A10 10 0 0 1 21 14M10 0.8A13 13 0 0 1 24 14" fill="none" stroke="#3f8fd8" strokeWidth="2" /></S></Box>
    <Box c="h-[52px] w-full"><S c={rs} v={V24}><path d="M3 1h12l6 6v16H3Z" fill="#fff" stroke="#3c78c0" /><path d="M15 1v6h6" fill="#cde" stroke="#3c78c0" /><circle cx="11" cy="14" r="5.5" fill="#3f9a50" /><path d="M8 11c3-2 6 0 6 3" stroke="#3c78c0" strokeWidth="2" fill="none" /></S></Box>
    <Box c="h-[50px] w-full"><S c={rs} v={V24}><circle cx="12" cy="12" r="11" fill="#8e8e8e" /><circle cx="12" cy="12" r="9" fill="#d8e6f4" /><path d="M12 5V12H18" stroke="#111" strokeWidth="1.6" fill="none" /></S></Box>
    <Box c="h-[40px] w-full"><svg viewBox="0 0 24 24" className={rs + " shrink-0"}><defs><linearGradient id="rb" x1="0" y1="0" x2="0" y2="1"><stop offset="0" stopColor="#e01010" /><stop offset=".25" stopColor="#f0e010" /><stop offset=".5" stopColor="#10d040" /><stop offset=".75" stopColor="#10a0e0" /><stop offset="1" stopColor="#1010d0" /></linearGradient></defs><rect x="2" y="1" width="9" height="22" fill="url(#rb)" /><path d="M13 7L22 20" stroke="#222" strokeWidth="2.6" /></svg></Box>
    <Box c="h-[42px] w-full"><S c={rs} v={V24}><Bar x={3} y={2} w={7} h={18} /><path d="M10 3L23 2L11 8L20 9L11 13" fill="none" stroke="#2a8ed8" strokeWidth="1.2" /><path d="M13 8L21 20" stroke="#222" strokeWidth="2.4" /><Spark x={8} y={21} s={0.4} /></S></Box>
    <Box c="h-[42px] w-full"><S c={rs} v={V24}><path d="M9 4c4-3 9-2 13 1l-5 1-6 7-2 2-5 6c-2 1-3-1-2-3l6-6 2-2Z" fill="#8a8a8a" stroke="#333" strokeWidth=".6" /><path d="M2 21c3 2 6 0 9-2" stroke="#f07020" strokeWidth="2.4" fill="none" /></S></Box>
    <Box c="h-[42px] w-full"><S c={rs} v={V24}><rect x="2" y="7" width="15" height="14" fill="#fff" stroke="#222" strokeWidth="1.4" /><rect x="5" y="10" width="5" height="8" fill="#fff" stroke="#6a4aa0" /><path d="M17 14h5v7h-8" stroke="#222" strokeWidth="1.6" fill="none" /><path d="M13 6l3-3h4l2 1-3 6h-6Z" fill="#f0d45c" stroke="#6a9a3c" /></S></Box>
  </div>
);

/* ---- tree ---- */
const Bulb = () => (
  <S c="w-[12px] h-[17px]" v="0 0 12 17">
    <path d="M2 5.5C2 2 3.5 0.5 6 0.5C8.5 0.5 10 2 10 5.5C10 8 8.5 9 8 11H4C3.5 9 2 8 2 5.5Z" fill="#f9e21a" stroke="#c7a416" strokeWidth=".8" />
    <rect x="4" y="12" width="4" height="1.8" fill="#c7a416" />
    <rect x="4.5" y="14.4" width="3" height="2" fill="#e2c42a" />
  </S>
);
const Folder = () => (
  <S c="w-[15px] h-[14px]" v="0 0 15 14">
    <path d="M0.5 2.5H4.5L6 1H9V2.5H14.5V13.5H0.5Z" fill="#f8e9a6" stroke="#8a7a3e" />
    <path d="M6 5H11V9H7V11.5H12" fill="none" stroke="#1733d6" strokeWidth="1.4" />
    <path d="M6.5 7H10" stroke="#1733d6" strokeWidth="1" />
  </S>
);
const OpA = () => (
  <S c="w-[16px] h-[16px]">
    <path d="M1 7C3 4 6 6 8 5C11 4 15 7 15 10C15 12 12 11 9 12C6 13 7 15 4 15C1 15 3 11 2 10C1 9 0 8 1 7Z" fill="#fff" stroke="#111" />
    <rect x="4" y="0" width="5" height="9" rx="1" fill="#4f5cb8" transform="rotate(-35 6 5)" />
    <path d="M4 3l4 4M3 5l3 3" stroke="#cfd6f7" />
  </S>
);
const OpB = () => (
  <S c="w-[16px] h-[16px]">
    <path d="M0.5 7L4 3H15.5V15.5H0.5Z" fill="#cfe4fb" stroke="#2f55d8" />
    <path d="M2 15C2 10 8 9 11 11C12 13 11 15 9 15Z" fill="#1f8f8a" />
    <path d="M10 0L14 1L11 9L8 8Z" fill="#1f1f1f" />
    <path d="M9 8L8 11" stroke="#e2a21c" strokeWidth="2" />
  </S>
);
const ToolChip = () => (
  <S c="w-[8px] h-[14px]" v="0 0 8 14"><rect x="0.5" y="0.5" width="7" height="13" fill="#4d58b8" /><path d="M1 2h6M1 5h6M1 8h6M1 11h6" stroke="#c8cef5" strokeDasharray="2 1" /></S>
);
const Chk = () => (
  <S c="w-[12px] h-[10px] shrink-0" v="0 0 12 10"><path d="M0 5L3 3L5 5L10 0L12 2L5 10Z" fill="#1fb548" stroke="#17903a" strokeWidth=".4" /></S>
);
const Key = () => (
  <S c="w-[14px] h-[14px] shrink-0" v="0 0 14 14"><path d="M0 11C1 8 3 8 4 7L9 0L13 2L7 9C7 11 5 14 3 14C0 14 0 12 0 11Z" fill="#e3b43a" stroke="#a8842a" strokeWidth=".5" /></S>
);

type R = { t: string; k: "root" | "g0" | "g1" | "g2" | "op"; op?: "a" | "b"; sel?: boolean; pur?: boolean; tool?: boolean; m?: "c" | "k"; last?: boolean };
const rows: R[] = [
  { t: "NC_PROGRAM", k: "root" },
  { t: "未用项", k: "g0" },
  { t: "高根鞋", k: "g1" },
  { t: "外部", k: "g2" },
  { t: "外部-1", k: "op", op: "a", sel: true, tool: true, m: "c" },
  { t: "外部-2", k: "op", op: "a", sel: true, m: "c" },
  { t: "外部-3", k: "op", op: "b", sel: true, m: "c" },
  { t: "外部-4", k: "op", op: "b", sel: true, m: "c" },
  { t: "外部-5", k: "op", op: "b", sel: true, m: "c" },
  { t: "外部-6", k: "op", op: "b", sel: true, m: "c" },
  { t: "外部-7", k: "op", op: "b", sel: true, m: "c", last: true },
  { t: "鞋口内部", k: "g2" },
  { t: "鞋口内部-1", k: "op", op: "b", m: "c" },
  { t: "鞋口内部-2", k: "op", op: "b", m: "c", last: true },
  { t: "鞋底-A", k: "g2" },
  { t: "鞋底-A-1", k: "op", op: "a", pur: true, tool: true, m: "k", last: true },
  { t: "鞋底-B", k: "g2" },
  { t: "鞋底-B-1", k: "op", op: "a", pur: true, tool: true, m: "c" },
  { t: "鞋底-B-2", k: "op", op: "a", m: "c", last: true },
  { t: "鞋背-A", k: "g2" },
  { t: "鞋背-A刀路1", k: "op", op: "b", pur: true, tool: true, m: "k", last: true },
  { t: "鞋背-B", k: "g2" },
  { t: "鞋背-B刀路1", k: "op", op: "b", pur: true, tool: true, m: "k" },
  { t: "鞋背-B刀路2", k: "op", op: "b", pur: true, tool: true, m: "k" },
  { t: "鞋背-B刀路3", k: "op", op: "b", m: "k", last: true },
  { t: "鞋背-C", k: "g2" },
  { t: "鞋背-C-1", k: "op", op: "b", m: "c", last: true },
  { t: "鞋背-D", k: "g2" },
  { t: "鞋背-D-1", k: "op", op: "b", m: "c", last: true },
];
const Exp = () => (
  <div className="w-[9px] h-[9px] border border-[#c4c4c4] bg-white flex items-center justify-center shrink-0"><div className="w-[5px] h-px bg-[#222]" /></div>
);
const Row = ({ r, i }: { r: R; i: number }) => {
  const odd = i % 2 === 1;
  const bg = odd ? "bg-[#f9f9f9]" : "bg-white";
  const tc = r.pur ? "text-[#7a3cc8]" : "text-[#1a1a1a]";
  const inGroups = i >= 3 && i <= 27;
  const topOnly68 = i === 27;
  return (
    <div className={"h-[20px] shrink-0 flex border-b border-[#ebebeb] text-[12px] " + bg}>
      <div className="w-[199px] h-full relative flex items-center shrink-0 whitespace-nowrap">
        {i === 1 && <><div className="absolute left-[9px] top-[9px] h-[11px] border-l border-dotted border-[#999]" /><div className="absolute left-[9px] top-[9px] w-[11px] border-t border-dotted border-[#999]" /></>}
        {i === 2 && <><div className="absolute left-[9px] top-0 h-[6px] border-l border-dotted border-[#999]" /><div className="absolute left-[28px] top-[14px] h-[6px] border-l border-dotted border-[#999]" /></>}
        {inGroups && <div className={"absolute left-[28px] top-0 border-l border-dotted border-[#999] " + (topOnly68 ? "h-[6px]" : "h-[20px]")} />}
        {r.k === "op" && <>
          <div className={"absolute left-[47px] top-0 border-l border-dotted border-[#999] " + (r.last ? "h-[10px]" : "h-[20px]")} />
          <div className="absolute left-[47px] top-[10px] w-[10px] border-t border-dotted border-[#999]" />
        </>}
        {r.k === "g2" && <div className="absolute left-[47px] top-[15px] h-[5px] border-l border-dotted border-[#999]" />}
        {r.k === "root" && <span className="pl-[4px] tracking-[0.5px] text-[#1a1a1a]">{r.t}</span>}
        {r.k === "g0" && <><div className="w-[20px]" /><Folder /><span className="pl-[3px]">{r.t}</span></>}
        {r.k === "g1" && <><div className="w-[5px]" /><Exp /><div className="w-[2px] h-px mx-[3px] border-t border-dotted border-[#999]" /><Bulb /><div className="w-[3px]" /><Folder /><span className="pl-[3px]">{r.t}</span></>}
        {r.k === "g2" && <><div className="w-[24px]" /><Exp /><div className="w-[2px] h-px mx-[3px] border-t border-dotted border-[#999]" /><Bulb /><div className="w-[3px]" /><Folder /><span className="pl-[3px]">{r.t}</span></>}
        {r.k === "op" && <>
          <div className="w-[59px] shrink-0" /><Bulb /><div className="w-[2px]" />
          {r.op === "a" ? <OpA /> : <OpB />}
          <div className={"flex-1 h-full flex items-center pl-[3px] " + tc + (r.sel ? " bg-[#8bc1d1]" : "")}>{r.t}</div>
        </>}
      </div>
      <div className="w-px h-[20px] bg-black shrink-0" />
      <div className={"w-[99px] h-full shrink-0 flex items-center pl-[9px] " + (r.sel ? "bg-[#8bc1d1]" : "")}>{r.tool && <ToolChip />}</div>
      <div className="w-px bg-[#ebebeb] shrink-0" />
      <div className={"flex-1 h-full overflow-hidden flex items-center " + (r.sel ? "bg-[#8bc1d1] " : "") + (r.m === "k" ? "pl-[4px]" : "pl-[6px]")}>{r.m === "c" ? <Chk /> : r.m === "k" ? <Key /> : null}</div>
    </div>
  );
};
const Nav = () => (
  <div className="w-[333px] shrink-0 border-r-2 border-[#a8a8a8] flex flex-col bg-white">
    <div className="h-[29px] shrink-0 flex items-center justify-between pl-[10px] pr-[20px] text-[12px] text-[#1a1a1a]">
      <span className="whitespace-nowrap tracking-[0.4px]">工序导航器 - 程序顺序</span>
      <div className="w-[12px] h-[11px] border border-[#222] border-t-2" />
    </div>
    <div className="h-[749px] shrink-0 ml-[7px] mr-[9px] border border-[#dcdcdc] flex flex-col overflow-hidden">
      <div className="h-[20px] shrink-0 flex bg-[#f0f0f0] border-b border-[#cfcfcf] text-[12px] text-[#333]">
        <div className="w-[199px] pl-[6px] flex items-center shrink-0 border-r border-[#d8d8d8]">名称</div>
        <div className="w-[100px] pl-[6px] flex items-center shrink-0 border-r border-[#d8d8d8]">换刀</div>
        <div className="flex-1 overflow-hidden pl-[6px] flex items-center">刀</div>
      </div>
      <div className="h-[710px] shrink-0 overflow-hidden flex flex-col">
        {rows.map((r, i) => <Row key={r.t} r={r} i={i} />)}
        {[0, 1, 2, 3, 4, 5, 6].map((n) => (
          <div key={n} className={"h-[20px] shrink-0 flex border-b border-[#ebebeb] " + (n % 2 === 0 ? "bg-[#f9f9f9]" : "bg-white")}>
            <div className="w-[199px] shrink-0" /><div className="w-px bg-black shrink-0" /><div className="w-[99px] shrink-0" /><div className="w-px bg-[#ebebeb]" />
          </div>
        ))}
      </div>
      <div className="h-[16px] mt-px shrink-0 bg-[#efefef] flex items-center">
        <Box c="w-[17px]"><S c="w-[7px] h-[9px]" v="0 0 7 9"><path d="M5.5 1L2 4.5L5.5 8" fill="none" stroke="#555" strokeWidth="1.6" /></S></Box>
        <div className="w-[102px] h-[15px] bg-[#c8c8c8]" />
        <div className="flex-1" />
        <Box c="w-[17px]"><S c="w-[7px] h-[9px]" v="0 0 7 9"><path d="M1.5 1L5 4.5L1.5 8" fill="none" stroke="#555" strokeWidth="1.6" /></S></Box>
      </div>
    </div>
    <div className="h-[5px] mt-px ml-[6px] mr-[8px] shrink-0 bg-[#ededed] border border-[#a8a8a8]" />
    <div className="h-[22px] shrink-0 ml-[6px] mr-[8px] flex items-center justify-between pl-[7px] pr-[6px] text-[14px] text-[#0a7ba0]">
      <span>相关性</span>
      <S c="w-[12px] h-[9px]" v="0 0 12 9"><path d="M1 1L6 7.5L11 1" fill="none" stroke="#0a7ba0" strokeWidth="2" /></S>
    </div>
    <div className="h-[3px] ml-[6px] mr-[8px] shrink-0 bg-[#cfcfcf]" />
  </div>
);

/* ---- 3D view ---- */
const Scene = () => (
  <svg viewBox="365 203 1551 786" className="w-[1551px] h-[786px] block">
    <defs>
      <linearGradient id="g1" x1="0" y1="0" x2="1" y2="1"><stop offset="0" stopColor="#5d7f8b" /><stop offset="1" stopColor="#b5dfeb" /></linearGradient>
      <linearGradient id="g2" x1="0" y1="0" x2="1" y2="1"><stop offset="0" stopColor="#72a3b4" /><stop offset="1" stopColor="#90c0cf" /></linearGradient>
      <linearGradient id="g3" x1="0" y1="0" x2="1" y2="0"><stop offset="0" stopColor="#6d8d99" /><stop offset=".7" stopColor="#5c7f8c" /><stop offset="1" stopColor="#8fb5c1" /></linearGradient>
    </defs>
    {/* back box edges */}
    <path d="M833 427L1065 334L1132 370M1065 334L1104 564" fill="none" stroke="#f79a9a" strokeWidth="1" />
    {/* block */}
    <polygon points="873,656 940,692 1171,599 1104,564" fill="#a0e0f4" stroke="#334" strokeWidth=".8" />
    <polygon points="940,692 1171,599 1182,662 950,753" fill="#6d97a6" stroke="#334" strokeWidth=".6" />
    <polygon points="873,656 940,692 950,753 883,718" fill="#55757f" stroke="#334" strokeWidth=".6" />
    {/* dashes behind */}
    <g fill="none" stroke="#1420e0" strokeWidth="1" strokeDasharray="7 9">
      <path d="M903 486L963 515" />
      <path d="M972 440L988 455" />
      <path d="M973 365L1003 388" />
      <path d="M1003 360L1007 365" />
      <path d="M1080 383L1147 407" />
      <path d="M1073 392L1140 416" />
      <path d="M1073 430L1153 453" />
      <path d="M1090 450L1170 465" />
      <path d="M1093 507L1118 523" />
      <path d="M1033 613L1133 588" />
      <path d="M830 624L898 642" />
      <path d="M1078 527L1112 527" />
    </g>
    <path d="M1112 527L1158 528" fill="none" stroke="#a9a9f0" strokeWidth="1.2" strokeDasharray="7 9" />
    {/* heel */}
    <path d="M1053 547C1056 570 1060 590 1063 598L1065 607L1075 613L1082 607L1083 567C1085 540 1088 520 1093 500L1083 503L1068 520Z" fill="url(#g3)" stroke="#2c3a40" strokeWidth=".7" />
    <path d="M1067 521L1068 608M1063 595L1075 600L1083 594" fill="none" stroke="#2c3a40" strokeWidth=".7" />
    {/* platform */}
    <polygon points="934,657 952,668 990,654 990,648 950,640" fill="#6f8a99" stroke="#2c3a40" strokeWidth=".7" />
    {/* heel-counter arch and sole */}
    <path d="M907 632C900 612 902 596 907 588C911 582 916 581 921 582C930 585 936 593 938 605L947 655L930 640Z" fill="url(#g1)" stroke="#222" strokeWidth="1.2" />
    <path d="M899 642C905 630 920 618 928 613L940 613L947 655C930 658 905 655 899 642Z" fill="#a0e0f4" stroke="#2c3a40" strokeWidth="1" />
    <path d="M921 582C930 585 936 593 938 605L947 655" fill="none" stroke="#dff6fb" strokeWidth="1.5" />
    {/* toe vamp */}
    <path d="M936 569L966 585L1023 612C1020 625 1015 632 1013 633C1005 645 980 653 948 656L941 613C939 600 936 592 920 582Z" fill="#00ffff" />
    <path d="M936 569L966 580" stroke="#2c3a40" strokeWidth="1" />
    <path d="M948 656C980 653 1005 645 1018 625" fill="none" stroke="#22dd55" strokeWidth="1" />
    {/* grey strap */}
    <path d="M1000 538L1040 559C1035 570 1033 580 1030 592L1022 610L966 585L982 565Z" fill="url(#g2)" stroke="#2c3a40" strokeWidth=".7" />
    <path d="M981 566L1029 591" stroke="#1f2a30" strokeWidth="1.8" />
    {/* cyan upper */}
    <path d="M1008 380L1013 425Q1017 436 1035 436L1000 447L997 460L982 513L972 519L985 523L1000 538L1040 559L1068 520L1082 517L1097 487C1107 475 1110 465 1109 460L1096 356C1070 345 1020 365 1008 380Z" fill="#00ffff" />
    <polygon points="972,519 983,510 985,523 993,532" fill="#5a7d8a" stroke="#2c3a40" strokeWidth=".5" />
    {/* dark blue band */}
    <polygon points="1010,467 1020,464 1048,488 1041,493" fill="#1b8cc8" />
    {/* triangle */}
    <polygon points="1043,493 1082,480 1083,502 1068,518" fill="#8fc4d6" stroke="#2c3a40" strokeWidth=".6" />
    <path d="M1082 480L1083 502L1068 520M1043 493L1068 518" fill="none" stroke="#2c3a40" strokeWidth=".8" />
    {/* second opening */}
    <path d="M1000 450C1004 436 1018 432 1030 436C1045 437 1060 436 1077 451C1060 456 1035 462 1013 465C1005 462 1001 458 1000 450Z" fill="url(#g1)" stroke="#222" strokeWidth=".8" />
    <path d="M1036 437h10v22h-10z" fill="#2fd0d8" opacity=".5" />
    <path d="M1041 437L1043 459M1075 430L1077 451" stroke="#222" strokeWidth=".8" fill="none" />
    {/* collar opening */}
    <ellipse cx="1052" cy="372" rx="44" ry="17" transform="rotate(-14 1052 372)" fill="#6c8a96" stroke="#1f2a30" strokeWidth="1" />
    <path d="M1032 363L1036 390L1085 378L1080 356Z" fill="#78c7d3" opacity=".75" />
    <path d="M1031 363L1034 390" stroke="#222" strokeWidth=".8" />
    {/* front wire box */}
    <path d="M833 427L899 462L1132 370L1182 662M899 462L950 753L1182 662M833 427L883 718L950 753" fill="none" stroke="#f79a9a" strokeWidth="1" />
    {/* yellow tips */}
    <path d="M1068 520Q1072 525 1078 527M1023 612L1032 614M1043 493Q1050 490 1056 490M1072 430Q1075 428 1078 429M1066 384Q1072 381 1080 383" fill="none" stroke="#f0b820" strokeWidth="1" />
    {/* MCS */}
    <path d="M982 398L968 325" stroke="#1238b8" strokeWidth="2" />
    <polygon points="966,305 973,325 962,325" fill="#1238b8" />
    <path d="M982 398L1050 372" stroke="#c83232" strokeWidth="2" />
    <polygon points="1068,365 1052,377 1050,367" fill="#c83232" />
    <path d="M982 398L940 375" stroke="#2e8b2e" strokeWidth="1.6" />
    <polygon points="929,370 943,373 938,379" fill="#2e8b2e" />
    <text x="970" y="303" fontSize="13" fill="#3656d8" fontFamily="Liberation Sans">ZM</text>
    <text x="929" y="367" fontSize="13" fill="#4a9a4a" fontFamily="Liberation Sans">YM</text>
    <text x="1053" y="359" fontSize="13" fill="#d04040" fontFamily="Liberation Sans">XM</text>
    {/* view triad */}
    <polygon points="412,918 433,911 447,917 451,940 429,950 418,938" fill="#d6d6d6" stroke="#bbb" />
    <path d="M412 918L428 925L447 917M428 925L429 950M418 938L451 926" fill="none" stroke="#bbb" />
    <path d="M429 949L424 918" stroke="#1038c8" strokeWidth="2.2" />
    <polygon points="423,910 427,921 420,921" fill="#1038c8" />
    <path d="M429 949L458 939" stroke="#d03838" strokeWidth="2" />
    <polygon points="467,936 457,943 455,937" fill="#d03838" />
    <path d="M429 949L412 941" stroke="#2e8b3e" strokeWidth="2" />
    <polygon points="407,938 415,939 412,944" fill="#2e8b3e" />
    <circle cx="429" cy="950" r="4" fill="#cfcfcf" />
    <text x="418" y="911" fontSize="11" fill="#4060e0" fontFamily="Liberation Sans">Z</text>
    <text x="468" y="938" fontSize="11" fill="#e04848" fontFamily="Liberation Sans">X</text>
    <text x="400" y="941" fontSize="11" fill="#4aa85a" fontFamily="Liberation Sans">Y</text>
    {/* logo */}
    <g transform="translate(1669 935)" stroke="#fff" strokeWidth=".8">
      {["#d8f0fd", "#97d9fa", "#81cdf0", "#83d4fb", "#a9dff9", "#c2e9fc"].map((f, i) => (
        <path key={f} transform={`rotate(${i * 60})`} fill={f} d="M-22 -28L0 -41L14 -33Q21 -24 19 -10L0 -21L-11 -15Q-13 -26 -22 -28Z" />
      ))}
      <polygon points="0,-16 16,-7 0,2 -16,-7" fill="#c4e9fc" />
      <polygon points="-16,-7 0,2 0,18 -16,9" fill="#a5daf8" />
      <polygon points="16,-7 0,2 0,18 16,9" fill="#82cdf2" />
    </g>
  </svg>
);

const Viewport = () => (
  <div className="flex-1 min-w-0 flex flex-col relative">
    <div className="h-[23px] shrink-0 flex border-b border-[#bfe0ea] -ml-px">
      <div className="w-[234px] bg-[#5aa2ba] flex items-center text-[12.5px] text-white whitespace-nowrap">
        <div className="w-[26px] flex justify-center"><S c="w-[18px] h-[16px]"><Bar x={3} y={1} w={3} h={12} /><path d="M6 4L15 2M6 7L14 5M6 10L13 8" stroke="#333" /><Spark x={4} y={14} s={0.3} /></S></div>
        <span className="w-[176px]">高根鞋UG11.0五轴联动刀路.prt</span>
        <S c="w-[12px] h-[12px]" v="0 0 12 12"><path d="M8 2H2V11H10V6M6 7L11 1" fill="none" stroke="#fff" strokeWidth="1.5" /></S>
        <S c="w-[12px] h-[12px] ml-[4px]" v="0 0 12 12"><path d="M2 2L10 10M10 2L2 10" stroke="#fff" strokeWidth="2.2" /></S>
      </div>
    </div>
    <Scene />
    <div className="absolute right-0 top-[530px] w-[6px] h-[59px] bg-[#4a5060] rounded-l-[3px] flex flex-col justify-center pl-[2px]">
      <div className="w-[2px] h-[20px] bg-[#d9d87a]" />
      <div className="w-[2px] h-[16px] bg-[#7fd8c8]" />
    </div>
  </div>
);

export default function App() {
  return (
    <div className="w-[1916px] h-[989px] overflow-hidden bg-white flex flex-col text-[#1a1a1a] font-['Noto_Sans_CJK_SC','Noto_Sans',sans-serif]">
      <TitleBar />
      <TabsBar />
      <Ribbon />
      <Toolbar />
      <div className="flex-1 flex min-h-0">
        <Rail />
        <Nav />
        <Viewport />
      </div>
    </div>
  );
}
